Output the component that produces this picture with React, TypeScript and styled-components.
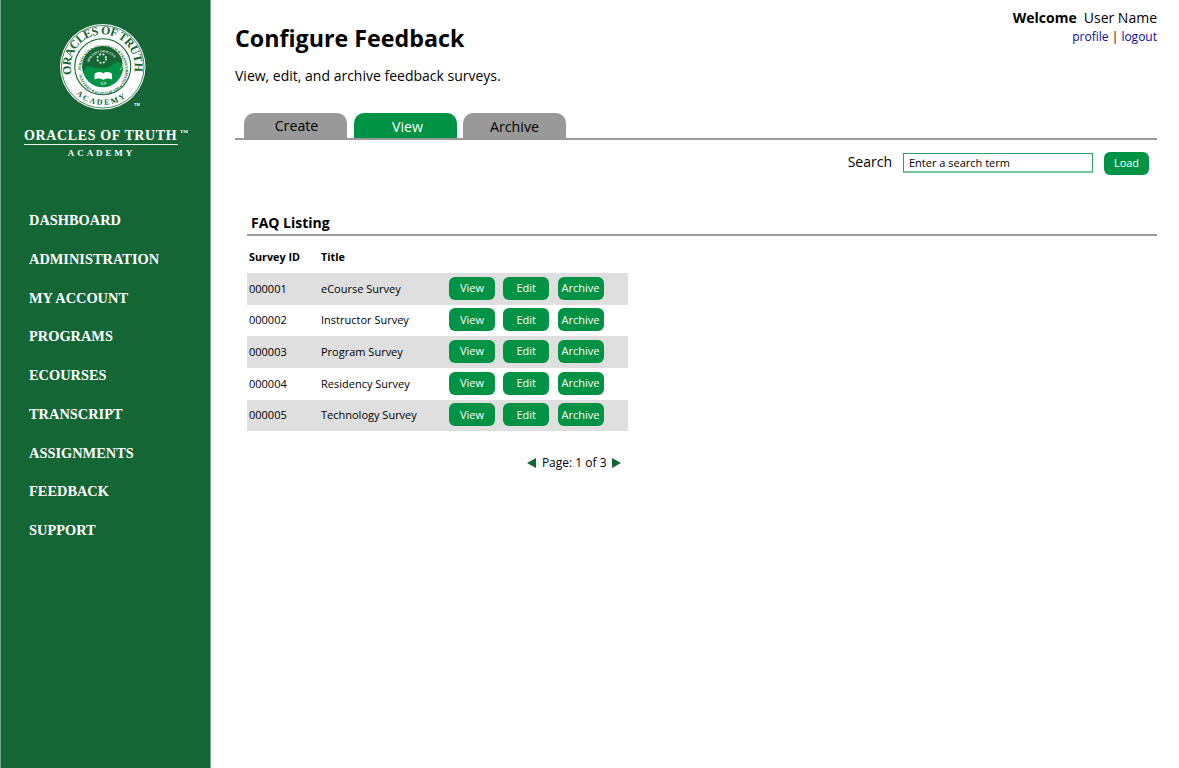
import React from "react";
import styled, { createGlobalStyle } from "styled-components";

const Global = createGlobalStyle`
  html, body { margin: 0; padding: 0; background: #fff; }
  body { font-family: "Open Sans", "Liberation Sans", sans-serif; color: #000; }
`;
const Page = styled.div`
  display: flex;
  min-height: 768px;
`;
const Sidebar = styled.aside`
  width: 211px;
  box-sizing: border-box;
  flex: none;
  background: #156635;
  border-left: 1px solid #6fa388;
  border-right: 1px solid #6fa388;
  display: flex;
  flex-direction: column;
  padding-top: 24px;
`;
const SealSvg = styled.svg`
  display: block;
  flex: none;
  margin-left: 59px;
`;
const Wordmark = styled.div`
  margin: 17px 0 0 23px;
  width: 154px;
  color: #fff;
  font-family: "Liberation Serif", serif;
`;
const WordTop = styled.div`
  font-size: 14px;
  line-height: 14px;
  font-weight: 700;
  letter-spacing: 0.64px;
  border-bottom: 1px solid #e8f0eb;
  padding-bottom: 1px;
  white-space: nowrap;
  position: relative;
`;
const Tm = styled.span`
  font-size: 5px;
  position: absolute;
  top: 0;
  left: 156px;
  letter-spacing: 0;
  line-height: 6px;
`;
const WordSub = styled.div`
  font-size: 9px;
  line-height: 11px;
  margin: 3px 0 0 1px;
  font-weight: 700;
  letter-spacing: 2.9px;
  text-align: center;
`;
const Nav = styled.nav`
  display: flex;
  flex-direction: column;
  padding: 42px 0 0 28px;
`;
const NavLink = styled.a`
  display: block;
  height: 38.75px;
  line-height: 38.75px;
  font-family: "Liberation Serif", serif;
  font-weight: 700;
  font-size: 14.4px;
  color: #fff;
  white-space: nowrap;
`;
const Main = styled.main`
  flex: 1;
  min-width: 0;
  padding: 0 22px 0 24px;
`;
const Header = styled.header`
  display: flex;
  justify-content: space-between;
  align-items: flex-start;
  height: 113px;
`;
const TitleBlock = styled.div`
  padding-top: 22px;
`;
const Title = styled.h1`
  margin: 0;
  font-size: 23.25px;
  line-height: 33px;
  font-weight: 700;
`;
const Sub = styled.p`
  margin: 11px 0 0;
  font-size: 14px;
  line-height: 19px;
`;
const UserBlock = styled.div`
  text-align: right;
  padding-top: 8px;
`;
const UserLine = styled.div`
  font-size: 14px;
  line-height: 19px;
  b { margin-right: 7px; }
`;
const UserLinks = styled.div`
  margin-top: 1px;
  font-size: 12px;
  line-height: 18px;
  a { color: #0b0b9a; text-decoration: none; }
`;
const Tabs = styled.div`
  display: flex;
  gap: 6.5px;
  padding-left: 9px;
  border-bottom: 2px solid #999;
  height: 25px;
`;
const Tab = styled.div<{ $active?: boolean; $pad: number; $lh: number }>`
  box-sizing: border-box;
  width: 103px;
  height: 25px;
  padding-left: ${(p) => p.$pad}px;
  border-radius: 10px 10px 0 0;
  background: ${(p) => (p.$active ? "#009245" : "#999")};
  color: ${(p) => (p.$active ? "#fff" : "#000")};
  font-size: 14.2px;
  line-height: ${(p) => p.$lh}px;
  text-align: center;
`;
const SearchBar = styled.div`
  display: flex;
  justify-content: flex-end;
  align-items: center;
  height: 22px;
  margin-top: 12px;
  padding-right: 8px;
`;
const SearchLabel = styled.label`
  font-size: 14px;
  line-height: 19px;
  margin-right: 11px;
  margin-top: -4px;
`;
const SearchInput = styled.input`
  box-sizing: border-box;
  width: 190px;
  height: 20px;
  padding: 0 5px;
  border: 1px solid #2f9e67;
  border-bottom: 2px solid #78c49d;
  outline: none;
  font-family: inherit;
  font-size: 11px;
  color: #000;
  margin-right: 11px;
  &::placeholder { color: #000; opacity: 1; }
`;
const Btn = styled.button<{ $w?: number }>`
  box-sizing: border-box;
  flex: none;
  width: ${(p) => p.$w ?? 46}px;
  height: 23px;
  border: 0;
  padding: 0 0 1px;
  border-radius: 6px;
  background: #009245;
  color: #fff;
  font-family: inherit;
  font-size: 11px;
  line-height: 21px;
`;
const Section = styled.section`
  margin: 39px 0 0 12px;
`;
const SectionTitle = styled.h2`
  margin: 0;
  padding: 0 0 2px 4px;
  font-size: 14px;
  line-height: 19px;
  font-weight: 700;
  border-bottom: 2px solid #999;
`;
const Table = styled.div`
  width: 381px;
`;
const Heads = styled.div`
  display: grid;
  grid-template-columns: 72px 1fr;
  padding: 13px 0 0 2px;
  box-sizing: border-box;
  height: 37px;
  font-size: 10.8px;
  font-weight: 700;
`;
const Row = styled.div<{ $alt?: boolean; $h: number }>`
  box-sizing: border-box;
  display: grid;
  grid-template-columns: 72px 128px auto;
  padding: 0 0 2px 2px;
  height: ${(p) => p.$h}px;
  align-items: center;
  font-size: 11px;
  background: ${(p) => (p.$alt ? "#dfdfdf" : "#fff")};
`;
const Cell = styled.div`
  line-height: 15px;
  white-space: nowrap;
`;
const Actions = styled.div`
  display: flex;
  gap: 8.25px;
`;
const Pager = styled.div`
  box-sizing: border-box;
  width: 381px;
  display: flex;
  justify-content: flex-end;
  align-items: center;
  gap: 5.5px;
  margin-top: 23px;
  padding-right: 7px;
  font-size: 12px;
  line-height: 17px;
  white-space: nowrap;
`;

const rows = [
  ["000001", "eCourse Survey", 32],
  ["000002", "Instructor Survey", 31],
  ["000003", "Program Survey", 32],
  ["000004", "Residency Survey", 32],
  ["000005", "Technology Survey", 31],
] as const;
const nav = ["DASHBOARD","ADMINISTRATION","MY ACCOUNT","PROGRAMS","ECOURSES","TRANSCRIPT","ASSIGNMENTS","FEEDBACK","SUPPORT"];

const serif = "Liberation Serif, serif";
const Seal = () => (
  <SealSvg width="90" height="88" viewBox="0 0 90 88">
    <defs>
      <path id="arcTop" d="M11.8 50.5 A32 32 0 1 1 73.7 50.5" fill="none" />
      <path id="arcBand" d="M21 46 A22.2 22.2 0 1 1 21.01 46.5" fill="none" />
      <path id="arcBot" d="M16 70 A38.5 38.5 0 0 0 70 70" fill="none" />
      <path id="arcMotto" d="M29 38 A15 15 0 0 1 57 38" fill="none" />
    </defs>
    <circle cx="42.75" cy="42.75" r="42.75" fill="#fff" />
    <circle cx="42.75" cy="42.75" r="41.3" fill="none" stroke="#156635" strokeWidth="0.8" />
    <circle cx="42.75" cy="42.75" r="28" fill="#fff" stroke="#156635" strokeWidth="1.1" />
    <circle cx="42.75" cy="42.75" r="20.5" fill="#009245" />
    <path d="M22.25 42.75 A20.5 20.5 0 0 1 63.25 42.75 C62 37 56 37 52 41 C47 45.5 38 45 33 43 C29 41.5 25 42 23.4 49 A20.5 20.5 0 0 1 22.25 42.75Z" fill="#156635" />
    <path d="M62.5 37 C63.6 41 62.5 44 60 46" fill="none" stroke="#cfe6d8" strokeWidth="0.9" />
    <circle cx="41.7" cy="34.5" r="4.4" fill="none" stroke="#fff" strokeWidth="1.5" strokeDasharray="2 1.5" />
    <path d="M34.5 55.5 V50 C37 47.5 41 47.5 43.3 49.5 C45.6 47.5 49.5 47.5 52 50 V55.5 C49 54 45.5 54.5 43.3 56 C41 54.5 37.5 54 34.5 55.5Z" fill="#fff" />
    <text fontFamily={serif} fontWeight="700" fontSize="12" fill="#156635" textLength="114" lengthAdjust="spacing">
      <textPath href="#arcTop">ORACLES OF TRUTH</textPath>
    </text>
    <text fontFamily={serif} fontWeight="700" fontSize="4" fill="#156635" textLength="135" lengthAdjust="spacing">
      <textPath href="#arcBand">PERSONALIS ✦ ET GLOBALIS ✦ TRANSFORMATIO ✦ DISCIPVLATVS ✦ FIDELITAS</textPath>
    </text>
    <text fontFamily={serif} fontWeight="700" fontSize="8" fill="#156635" textLength="54" lengthAdjust="spacing">
      <textPath href="#arcBot">ACADEMY</textPath>
    </text>
    <text fontFamily={serif} fontWeight="700" fontSize="3.2" fill="#fff" textLength="31" lengthAdjust="spacing">
      <textPath href="#arcMotto">BOS VINT ORACULA</textPath>
    </text>
    <text x="43.3" y="61" textAnchor="middle" fontFamily="Liberation Sans, sans-serif" fontSize="3" fill="#fff">SOP</text>
    <text x="74" y="82" fontFamily="Liberation Sans, sans-serif" fontWeight="700" fontSize="4" fill="#fff">TM</text>
  </SealSvg>
);

const Arrow = ({ dir }: { dir: "l" | "r" }) => (
  <svg width="9" height="10" viewBox="0 0 9 10">
    <path d={dir === "l" ? "M9 0V10L0 5Z" : "M0 0V10L9 5Z"} fill="#156635" />
  </svg>
);

export default function App() {
  return (
    <Page>
      <Global />
      <Sidebar>
        <Seal />
        <Wordmark>
          <WordTop>ORACLES OF TRUTH<Tm>TM</Tm></WordTop>
          <WordSub>ACADEMY</WordSub>
        </Wordmark>
        <Nav>{nav.map((n) => <NavLink key={n}>{n}</NavLink>)}</Nav>
      </Sidebar>
      <Main>
        <Header>
          <TitleBlock>
            <Title>Configure Feedback</Title>
            <Sub>View, edit, and archive feedback surveys.</Sub>
          </TitleBlock>
          <UserBlock>
            <UserLine><b>Welcome</b>User Name</UserLine>
            <UserLinks><a href="#p">profile</a> | <a href="#l">logout</a></UserLinks>
          </UserBlock>
        </Header>
        <Tabs>
          <Tab $pad={2} $lh={25}>Create</Tab>
          <Tab $pad={5} $lh={27} $active>View</Tab>
          <Tab $pad={0} $lh={27}>Archive</Tab>
        </Tabs>
        <SearchBar>
          <SearchLabel>Search</SearchLabel>
          <SearchInput placeholder="Enter a search term" />
          <Btn $w={45}>Load</Btn>
        </SearchBar>
        <Section>
          <SectionTitle>FAQ Listing</SectionTitle>
          <Table>
            <Heads><Cell>Survey ID</Cell><Cell>Title</Cell></Heads>
            {rows.map(([id, title, h], i) => (
              <Row key={id} $alt={i % 2 === 0} $h={h}>
                <Cell>{id}</Cell>
                <Cell>{title}</Cell>
                <Actions><Btn>View</Btn><Btn>Edit</Btn><Btn>Archive</Btn></Actions>
              </Row>
            ))}
          </Table>
          <Pager><Arrow dir="l" />Page: 1 of 3<Arrow dir="r" /></Pager>
        </Section>
      </Main>
    </Page>
  );
}
